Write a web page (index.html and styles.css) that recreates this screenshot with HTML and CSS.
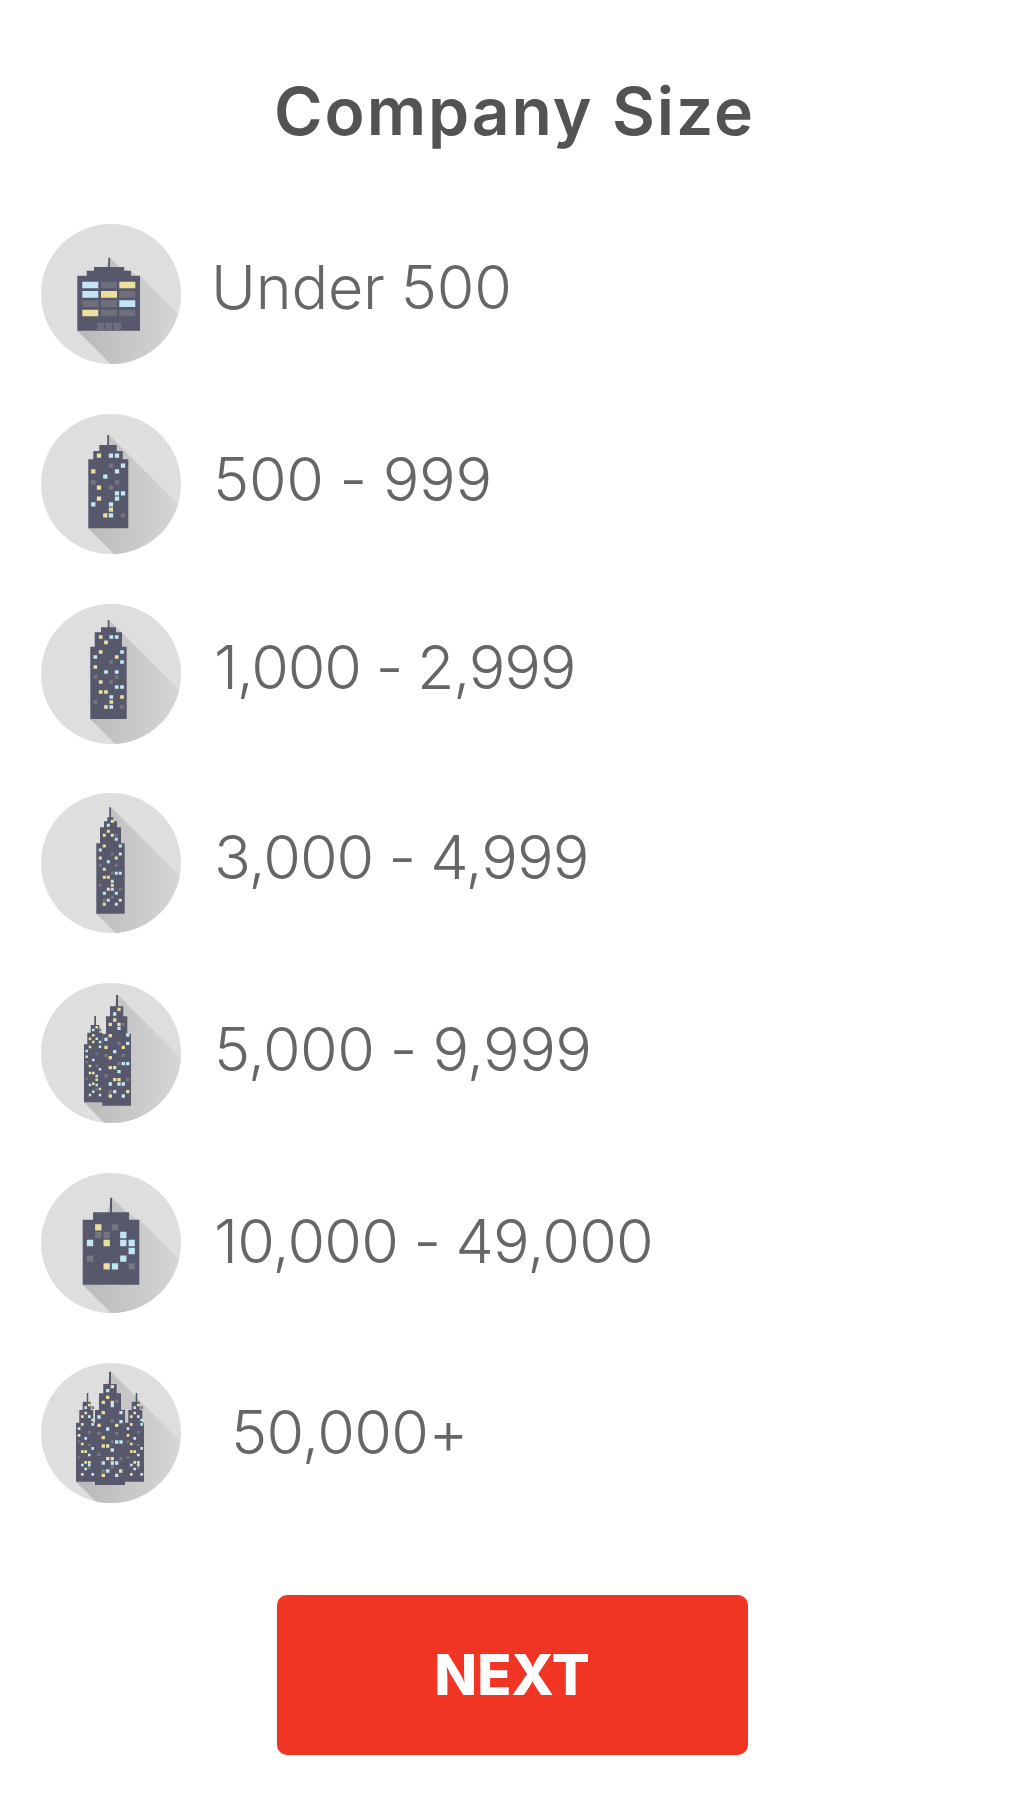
FILE: index.html
```html
<!DOCTYPE html>
<html lang="en">
<head>
<meta charset="UTF-8">
<meta name="viewport" content="width=device-width, initial-scale=1.0">
<title>Company Size</title>
<link rel="stylesheet" href="styles.css">
</head>
<body>
<svg class="defs" width="0" height="0">
  <defs>
    <linearGradient id="shade" gradientUnits="userSpaceOnUse" x1="40" y1="0" x2="145" y2="0">
      <stop offset="0" stop-color="#b9b9b9"/>
      <stop offset="1" stop-color="#d8d8d8"/>
    </linearGradient>
    <clipPath id="disc"><circle cx="70" cy="70" r="70"/></clipPath>
  </defs>
</svg>
<main>
  <h1 class="title">Company Size</h1>
  <ul class="sizes">
    <li class="size">
      <svg class="icon" viewBox="0 0 140 140">
        <circle class="disc" cx="70" cy="70" r="70"/>
        <path class="shadow" d="M69 33.7L78.3 43H83L86.7 46.7H90L95 51.7H99L199 151.7L136.3 206.7L36.3 106.7Z"/>
        <path class="body" d="M67.3 33.7H69V43H83V46.7H90V51.7H99V106.7H36.3V51.7H45.7V46.7H53V43H67.3Z"/>
        <path class="pane-g" d="M60 57.7h16v6.6H60zM78.3 67h16v6.7h-16zM41.3 76.3h16V83h-16zM60 76.3h16V83H60zM60 85.7h16v6.6H60zM78.3 85.7h16v6.6h-16zM56 98.7h7v8h-7zM64 98.7h7v8h-7zM72.7 98.7h7.3v8h-7.3z"/>
        <path class="pane-b" d="M41.3 57.7h16v6.6h-16zM41.3 67h16v6.7h-16zM78.3 76.3h16V83h-16z"/>
        <path class="pane-y" d="M78.3 57.7h16v6.6h-16zM60 67h16v6.7H60zM41.3 85.7h16v6.6h-16z"/>
      </svg>
      <span class="label label-under">Under 500</span>
    </li>
    <li class="size">
      <svg class="icon" viewBox="0 0 140 140">
        <circle class="disc" cx="70" cy="70" r="70"/>
        <path class="shadow" d="M68 21L168 121L147.3 214.3L47.3 114.3Z"/>
        <path class="body" d="M66.3 21H68V31H75.7V37H81.7V45.3H87.3V114.3H47.3V45.3H52.3V37H58.3V31H66.3Z"/>
        <g class="w43">
          <path class="dot-g" d="M70 51.7h0M52.3 68.3h0M76 68.3h0M70 73.7h0M82 101.3h0"/>
          <path class="dot-b" d="M70 41.7h0M76 41.7h0M82 51.7h0M76 57.3h0M64.3 62.7h0M76 79.3h0M82 79.3h0M76 84.7h0M52.3 90.3h0M70 90.3h0M70 101.3h0"/>
          <path class="dot-y" d="M58 41.7h0M52.3 57.3h0M58 73.7h0M58 84.7h0M70 95.7h0M64.3 101.3h0"/>
        </g>
      </svg>
      <span class="label label-500">500 - 999</span>
    </li>
    <li class="size">
      <svg class="icon" viewBox="0 0 140 140">
        <circle class="disc" cx="70" cy="70" r="70"/>
        <path class="shadow" d="M68.3 16L168.3 116L149.3 215L49.3 115Z"/>
        <path class="body" d="M66.7 16H68.3V23.3H75V28.3H81V42.7H85.7V115H49.3V42.7H53.7V28.3H60V23.3H66.7Z"/>
        <g class="w37">
          <path class="dot-g" d="M70.3 58h0M54.3 73h0M75.7 73h0M70.3 78h0M54.3 98h0M81 103h0"/>
          <path class="dot-b" d="M70.3 33h0M75.7 33h0M81 48h0M54.3 53h0M81 58h0M65 68h0M75.7 68h0M75.7 83h0M81 83h0M70.3 93h0M70.3 103h0"/>
          <path class="dot-y" d="M59.7 33h0M65 38.3h0M59.7 48h0M75.7 53h0M54.3 63h0M59.7 78h0M59.7 88h0M65 88h0M81 93h0M70.3 98h0M65 103h0"/>
        </g>
      </svg>
      <span class="label label-1000">1,000 - 2,999</span>
    </li>
    <li class="size">
      <svg class="icon" viewBox="0 0 140 140">
        <circle class="disc" cx="70" cy="70" r="70"/>
        <path class="shadow" d="M70 14.3L170 114.3L155.3 220.7L55.3 120.7Z"/>
        <path class="body" d="M68.3 14.3H70V24.3H72.3V28.3H76V34.3H80V50.3H83.7V120.7H55.3V50.3H59V34.3H63V28.3H66.3V24.3H68.3Z"/>
        <g class="w30">
          <path class="dot-g" d="M75.3 42.3h0M71.3 61h0M59.3 72.3h0M75.3 72.3h0M71.3 80.3h0M59.3 92.3h0M79.3 96.3h0M71.3 104.3h0M63.3 107.3h0"/>
          <path class="dot-b" d="M67.3 32.3h0M75.3 46.3h0M79.3 53h0M59.3 57h0M79.3 61h0M67.3 68.7h0M75.3 80.3h0M79.3 80.3h0M71.3 88.3h0M71.3 96.3h0M63.3 100.3h0M75.3 100.3h0M67.3 107.3h0M75.3 111.3h0"/>
          <path class="dot-y" d="M71.3 28.3h0M67.3 38.3h0M63.3 42.3h0M71.3 42.3h0M63.3 53h0M75.3 65h0M59.3 65h0M63.3 76.3h0M63.3 84.3h0M67.3 84.3h0M71.3 92.3h0M67.3 96.3h0M79.3 107.3h0M63.3 111.3h0"/>
        </g>
      </svg>
      <span class="label label-3000">3,000 - 4,999</span>
    </li>
    <li class="size">
      <svg class="icon" viewBox="0 0 140 140">
        <circle class="disc" cx="70" cy="70" r="70"/>
        <path class="shadow" d="M77 12L177 112L143 219.3L43 119.3Z"/>
        <path class="body" d="M53.3 33H55V42H58.3V49.7H61.5V61.3H63V119.3H43V61.3H46.3V49.7H49.7V42H53.3Z"/>
        <g class="w25">
          <path class="dot-g" d="M59 47h0M55.7 70.7h0M45.7 79.3h0M55.7 82.7h0M45.7 96h0M55.7 106h0"/>
          <path class="dot-b" d="M52.3 47h0M55.7 55.7h0M59 59h0M45.7 68h0M59 63.7h0M52.3 77h0M59 86.3h0M55.7 93h0M55.7 102h0M49 102h0M52.3 108.7h0M59 112h0"/>
          <path class="dot-y" d="M55.7 44.3h0M52.3 52.3h0M49 55.7h0M52.3 59h0M49 64h0M45.7 73.7h0M49 83h0M49 90h0M52.3 90h0M55.7 96.7h0M52.3 100.7h0M59 106h0M49 112h0"/>
        </g>
        <path class="body" d="M75 12H77V23.3H82.3V33.3H86.3V51H90V122.7H61.3V51H65V33.3H69V23.3H75Z"/>
        <g class="w33">
          <path class="dot-g" d="M82.3 41.3h0M78 60.3h0M65 72.3h0M82.3 72.3h0M78 80.7h0M65 92.7h0M86.7 96.7h0M69.3 108.7h0"/>
          <path class="dot-b" d="M73.7 31h0M78 45.3h0M86.7 52h0M65 56.3h0M86.7 60.3h0M73.7 68.7h0M82.3 80.7h0M86.7 80.7h0M78 88.7h0M78 101h0M69.3 101h0M82.3 101h0M73.7 108.7h0M82.3 113h0"/>
          <path class="dot-y" d="M78 26.3h0M73.7 37h0M69.3 41.3h0M78 41.3h0M69.3 52.7h0M65 64.3h0M82.3 64.3h0M69.3 74.7h0M69.3 84.7h0M73.7 84.7h0M78 96.7h0M73.7 96.7h0M86.7 108.7h0M69.3 113h0"/>
        </g>
      </svg>
      <span class="label label-5000">5,000 - 9,999</span>
    </li>
    <li class="size">
      <svg class="icon" viewBox="0 0 140 140">
        <circle class="disc" cx="70" cy="70" r="70"/>
        <path class="shadow" d="M71 24.7L85.6 39.3H88L95.4 46.7H98.3L198.3 146.7L141.7 211.7L41.7 111.7Z"/>
        <path class="body" d="M69 24.7H71V39.3H88V46.7H98.3V111.7H41.7V46.7H52V39.3H69Z"/>
        <g class="w63">
          <path class="dot-g" d="M74 54.3h0M57.3 62h0M65.7 62h0M49 85.7h0M90.7 93.3h0"/>
          <path class="dot-b" d="M82.3 62h0M49 70h0M82.3 70h0M90.7 70h0M90.7 78h0M82.3 85.7h0M74 93.3h0"/>
          <path class="dot-y" d="M57.3 54.3h0M65.7 70h0M65.7 93.3h0"/>
        </g>
      </svg>
      <span class="label label-10000">10,000 - 49,000</span>
    </li>
    <li class="size">
      <svg class="icon" viewBox="0 0 140 140">
        <circle class="disc" cx="70" cy="70" r="70"/>
        <path class="shadow" d="M70 8.7L170 108.7L135 218.7L35 118.7Z"/>
        <g id="side-tower">
          <path class="body" d="M45.7 30H47.3V38.7H49.7V47H52.3V59.7H54V118.7H35V59.7H38.3V47H41.7V38.7H45.7Z"/>
          <g class="w27">
            <path class="dot-g" d="M51.7 44.7h0M48.3 69.3h0M38 78.7h0M48.3 82h0M38 94.7h0M48.3 104.7h0"/>
            <path class="dot-b" d="M44.7 44.7h0M48.3 53.7h0M51.7 57h0M38 65.7h0M51.7 61.3h0M44.7 75.3h0M51.7 85.3h0M48.3 92h0M48.3 102h0M41.3 102h0M44.7 106h0M51.7 111.3h0"/>
            <path class="dot-y" d="M48.3 42h0M44.7 50h0M41.3 53.7h0M41.3 61.3h0M38 72.3h0M41.3 81h0M41.3 88.7h0M44.7 88.7h0M48.3 99.3h0M44.7 99.3h0M41.3 111.3h0"/>
          </g>
        </g>
        <use href="#side-tower" x="49"/>
        <path class="body" d="M68 8.7H70V21H75.7V30.3H80V47H84V122H54V47H58V30.3H62.3V21H68Z"/>
        <g class="w33">
          <path class="dot-g" d="M75.7 38.3h0M71.3 58h0M58 70.7h0M75.7 70.7h0M71.3 78.7h0M58 91.3h0M80 95.7h0M71.3 104h0M62.3 108h0"/>
          <path class="dot-b" d="M66.7 27.7h0M71.3 42.7h0M80 49.7h0M58 54h0M80 58.7h0M66.7 66h0M75.7 79h0M80 79h0M71.3 87h0M71.3 100h0M62.3 100h0M75.7 100h0M66.7 108h0M75.7 112.3h0"/>
          <path class="dot-y" d="M71.3 23.7h0M66.7 34.3h0M62.3 39.3h0M71.3 39.3h0M62.3 49.7h0M58 62.3h0M75.7 62.3h0M62.3 74.7h0M62.3 83h0M66.7 83h0M71.3 95.7h0M66.7 95.7h0M79.7 108h0M62.3 112.3h0"/>
        </g>
      </svg>
      <span class="label label-50000">50,000+</span>
    </li>
  </ul>
  <button class="next" type="button">NEXT</button>
</main>
</body>
</html>
```

FILE: styles.css
```css
body {
  margin: 0;
  background: #fff;
  font-family: "Inter", "Liberation Sans", sans-serif;
}
.defs {
  display: block;
}
main {
  display: flex;
  flex-direction: column;
  height: 1800px;
  padding-top: 71px;
  box-sizing: border-box;
}
.title {
  margin: 0;
  padding-left: 5px;
  height: 80px;
  line-height: 80px;
  font-size: 66px;
  font-weight: 600;
  letter-spacing: 1.9px;
  color: #535353;
  text-align: center;
}
.sizes {
  list-style: none;
  margin: 73px 0 0;
  padding: 0 0 0 41px;
  display: flex;
  flex-direction: column;
  gap: 49.8px;
}
.size {
  display: flex;
  align-items: center;
  height: 140px;
}
.icon {
  width: 140px;
  height: 140px;
  flex: none;
}
.disc { fill: #dedede; }
.shadow { fill: url(#shade); clip-path: url(#disc); }
.body { fill: #57586b; }
.pane-g { fill: #6d6e7e; }
.pane-b { fill: #c0e7f3; }
.pane-y { fill: #ebe09b; }
.dot-g, .dot-b, .dot-y {
  fill: none;
  stroke-linecap: square;
}
.dot-g { stroke: #77777f; }
.dot-b { stroke: #c0e7f3; }
.dot-y { stroke: #ebe09b; }
.w63 { stroke-width: 6.3; }
.w43 { stroke-width: 4.3; }
.w37 { stroke-width: 3.7; }
.w33 { stroke-width: 3.3; }
.w30 { stroke-width: 3; }
.w27 { stroke-width: 2.7; }
.w25 { stroke-width: 2.5; }
.label {
  font-size: 61px;
  font-weight: 300;
  letter-spacing: -0.6px;
  word-spacing: -1px;
  color: #666;
}
.label-under { margin: 0 0 14px 30px; letter-spacing: -0.2px; }
.label-500 { margin: 0 0 10px 32px; letter-spacing: -0.3px; }
.label-1000 { margin: 0 0 14px 33px; letter-spacing: -1.2px; }
.label-3000 { margin: 0 0 12px 33px; letter-spacing: -1px; }
.label-5000 { margin: 0 0 8px 33px; }
.label-10000 { margin: 0 0 3px 33px; letter-spacing: -0.8px; }
.label-50000 { margin: 0 0 1px 50px; }
.next {
  display: block;
  align-self: center;
  width: 471px;
  height: 160px;
  margin-top: 92px;
  border: 0;
  border-radius: 10px;
  background: #f13525;
  color: #fff;
  font-family: inherit;
  font-size: 56px;
  font-weight: 800;
}
```
